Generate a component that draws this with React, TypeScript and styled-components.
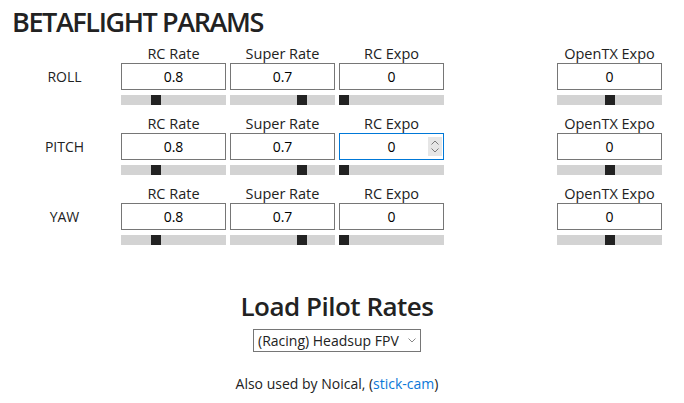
import React from 'react';
import styled, { createGlobalStyle } from 'styled-components';

const GlobalStyle = createGlobalStyle`
    body {
        margin: 0;
        background: #fff;
        color: #222;
        font-family: "Open Sans", "Liberation Sans", sans-serif;
    }
`;

const Page = styled.div`
    width: 650px;
    padding: 0 12px;
`;

const Title = styled.h1`
    margin: 0;
    height: 43px;
    font-size: 27px;
    line-height: 43px;
    font-weight: 600;
    letter-spacing: -1.4px;
    color: #222;
`;

const ParamRow = styled.div`
    display: grid;
    grid-template-columns: repeat(6, 105px);
    column-gap: 4px;
    margin-bottom: 8px;
`;

const AxisLabel = styled.div`
    grid-column: 1;
    height: 27px;
    margin-top: 20px;
    display: flex;
    align-items: center;
    justify-content: center;
    font-size: 14px;
`;

const Field = styled.div<{ col: number }>`
    grid-column: ${props => props.col};
    display: flex;
    flex-direction: column;
`;

const FieldLabel = styled.div`
    height: 20px;
    line-height: 21px;
    text-align: center;
    font-size: 14.5px;
`;

const InputWrap = styled.div`
    position: relative;
`;

const NumberBox = styled.input<{ focused?: boolean }>`
    box-sizing: border-box;
    width: 105px;
    height: 27px;
    margin: 0;
    padding: 0 4px;
    border: 1px solid ${props => props.focused ? '#0078d7' : '#767676'};
    border-radius: 0;
    outline: none;
    background: #fff;
    color: #000;
    font-family: inherit;
    font-size: 14px;
    text-align: center;
`;

const Spinner = styled.div`
    position: absolute;
    right: 2px;
    top: 4px;
    width: 14px;
    height: 19px;
    background: #e6e6e6;
    display: flex;
    flex-direction: column;
    align-items: center;
    justify-content: center;
    gap: 3px;
`;

const Slider = styled.input`
    -webkit-appearance: none;
    appearance: none;
    display: block;
    width: 105px;
    height: 10px;
    margin: 5px 0 0;
    padding: 0;
    background: #d3d3d3;
    outline: none;

    &::-webkit-slider-runnable-track {
        height: 10px;
        background: #d3d3d3;
    }

    &::-webkit-slider-thumb {
        -webkit-appearance: none;
        width: 10px;
        height: 10px;
        border: none;
        border-radius: 0;
        background: #222;
    }
`;

const LoadSection = styled.div`
    display: flex;
    flex-direction: column;
    align-items: center;
    margin-top: 43px;
`;

const LoadTitle = styled.h2`
    margin: 0;
    height: 36px;
    font-size: 26px;
    line-height: 36px;
    font-weight: 600;
    letter-spacing: -0.5px;
    color: #222;
`;

const SelectWrap = styled.div`
    position: relative;
    margin-top: 5px;
`;

const PilotSelect = styled.select`
    -webkit-appearance: none;
    appearance: none;
    box-sizing: border-box;
    width: 168px;
    height: 23px;
    margin: 0;
    padding: 0 14px 0 4px;
    border: 1px solid #767676;
    border-radius: 0;
    background: #fff;
    color: #222;
    font-family: inherit;
    font-size: 14px;
`;

const Chevron = styled.svg`
    position: absolute;
    right: 5px;
    top: 9px;
    pointer-events: none;
`;

const Footer = styled.p`
    margin: 22px 0 0;
    line-height: 20px;
    font-size: 14px;
    color: #222;

    a {
        color: #0a78d8;
        text-decoration: none;
    }
`;

interface FieldSpec {
    label: string;
    value: number;
    min: number;
    max: number;
    col: number;
}

const fields: FieldSpec[] = [
    { label: 'RC Rate', value: 0.8, min: 0, max: 2.5, col: 2 },
    { label: 'Super Rate', value: 0.7, min: 0, max: 1, col: 3 },
    { label: 'RC Expo', value: 0, min: 0, max: 1, col: 4 },
    { label: 'OpenTX Expo', value: 0, min: -1, max: 1, col: 6 },
];

const axes = ['ROLL', 'PITCH', 'YAW'];

function SpinArrows () {
    return <Spinner>
        <svg width="8" height="5" viewBox="0 0 8 5">
            <path d="M0.5 4.5 L4 1 L7.5 4.5" fill="none" stroke="#7a7a7a" strokeWidth="1"/>
        </svg>
        <svg width="8" height="5" viewBox="0 0 8 5">
            <path d="M0.5 0.5 L4 4 L7.5 0.5" fill="none" stroke="#7a7a7a" strokeWidth="1"/>
        </svg>
    </Spinner>
}

function App () {
    return <Page>
        <GlobalStyle/>
        <Title>BETAFLIGHT PARAMS</Title>

        {axes.map(axis =>
            <ParamRow key={axis}>
                <AxisLabel>{axis}</AxisLabel>
                {fields.map(f => {
                    const focused = axis === 'PITCH' && f.label === 'RC Expo';
                    return <Field col={f.col} key={f.label}>
                        <FieldLabel>{f.label}</FieldLabel>
                        <InputWrap>
                            <NumberBox type="text" defaultValue={String(f.value)} focused={focused}/>
                            {focused && <SpinArrows/>}
                        </InputWrap>
                        <Slider type="range" min={f.min} max={f.max} step={0.01} defaultValue={f.value}/>
                    </Field>
                })}
            </ParamRow>
        )}

        <LoadSection>
            <LoadTitle>Load Pilot Rates</LoadTitle>
            <SelectWrap>
                <PilotSelect defaultValue="headsup">
                    <option value="headsup">(Racing) Headsup FPV</option>
                </PilotSelect>
                <Chevron width="8" height="5" viewBox="0 0 8 5">
                    <path d="M0.5 0.5 L4 4 L7.5 0.5" fill="none" stroke="#888" strokeWidth="1"/>
                </Chevron>
            </SelectWrap>
            <Footer>Also used by Noical, (<a href="#">stick-cam</a>)</Footer>
        </LoadSection>
    </Page>
}

export default App;
